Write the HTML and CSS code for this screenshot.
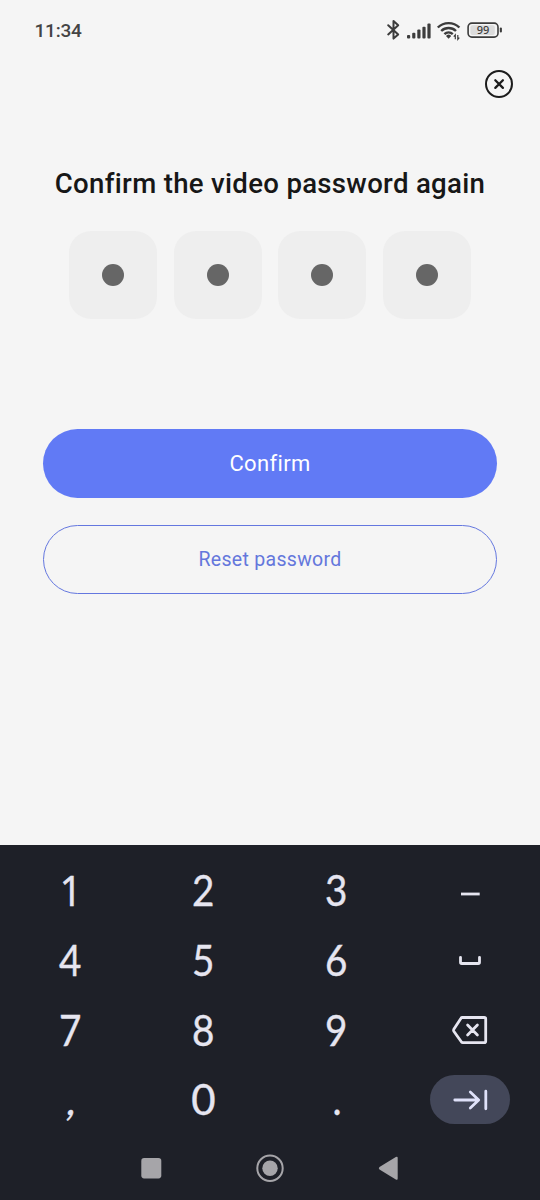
FILE: index.html
```html
<!DOCTYPE html>
<html lang="en">
<head>
<meta charset="utf-8">
<meta name="viewport" content="width=device-width">
<title>Confirm password</title>
<link rel="stylesheet" href="styles.css">
</head>
<body>
<div class="screen">
  <header class="status">
    <span class="time">11:34</span>
    <svg class="status-icons" width="120" height="24" viewBox="0 0 120 24">
      <path class="bt" d="M3.2 7.2 13.2 16.4 8.5 20.6V2.9L13.2 7.2 3.2 16.4"/>
      <g class="solid">
        <rect x="22" y="17" width="3.2" height="3.4" rx="1"/>
        <rect x="27.2" y="14.7" width="3.2" height="5.7" rx="1"/>
        <rect x="32.3" y="11.5" width="3.2" height="8.9" rx="1"/>
        <rect x="37.4" y="8.7" width="3.2" height="11.7" rx="1"/>
        <rect x="42.4" y="5.5" width="3.2" height="14.9" rx="1"/>
        <path d="M61 18a3 3 0 0 1 5.2 0L63.6 20.8z"/>
      </g>
      <path class="wifi" d="M52.8 9.5a15.5 15.5 0 0 1 21.6 0M56.2 13a10.8 10.8 0 0 1 14.8 0M59.4 16.1a6.2 6.2 0 0 1 8.4 0"/>
      <path class="data" d="M70.3 21.2v-4.4l-1.5 1.8M72.8 17v4.4l1.5-1.8"/>
      <rect class="battery" x="83.1" y="5.1" width="29.9" height="14" rx="3.8"/>
      <rect class="charge" x="85.4" y="7.2" width="24.4" height="9.8" rx="2"/>
      <rect class="solid" x="114.8" y="9.6" width="2.1" height="5" rx="1"/>
      <text class="percent" x="98" y="16.3" text-anchor="middle">99</text>
    </svg>
  </header>
  <div class="toolbar">
    <svg width="30" height="30" viewBox="0 0 30 30" role="img" aria-label="Close">
      <circle class="close" cx="15" cy="15" r="13"/>
      <path class="close cross" d="m11.3 11.3 7.6 7.6m0-7.6-7.6 7.6"/>
    </svg>
  </div>
  <main class="content">
    <h1 class="title">Confirm the video password again</h1>
    <div class="pin">
      <div class="cell"><i class="dot"></i></div>
      <div class="cell"><i class="dot"></i></div>
      <div class="cell"><i class="dot"></i></div>
      <div class="cell"><i class="dot"></i></div>
    </div>
    <button class="button primary">Confirm</button>
    <button class="button outline">Reset password</button>
  </main>
  <section class="keyboard">
    <div class="keys">
      <span class="key"><b class="one">1</b></span><span class="key"><b>2</b></span><span class="key"><b>3</b></span>
      <span class="key"><svg width="40" height="40" viewBox="0 0 40 40"><path class="stroke butt" d="M11 23h18.7"/></svg></span>
      <span class="key"><b>4</b></span><span class="key"><b>5</b></span><span class="key"><b>6</b></span>
      <span class="key"><svg width="40" height="40" viewBox="0 0 40 40"><path class="stroke" d="M10.5 16.3v5q0 1.2 1.2 1.2h16.6q1.2 0 1.2-1.2v-5"/></svg></span>
      <span class="key"><b>7</b></span><span class="key"><b>8</b></span><span class="key"><b>9</b></span>
      <span class="key"><svg width="40" height="40" viewBox="0 0 40 40"><path class="stroke" d="M12.3 7.5h22q1.4 0 1.4 1.4v22.3q0 1.4-1.4 1.4H12.8q-.8 0-1.3-.6L3.8 21.3q-.6-1 0-2L11 8.2q.4-.7 1.3-.7zM17.6 15.1l9.8 9.8m0-9.8L17.6 24.9"/></svg></span>
      <span class="key"><b class="comma">,</b></span><span class="key"><b class="zero">0</b></span><span class="key"><b class="period">.</b></span>
      <span class="key"><span class="next"><svg width="40" height="40" viewBox="0 0 40 40"><path class="stroke next-icon" d="M4.8 20h23.5M20.3 12l8.4 8-8.4 8M35.8 11.2v17.6"/></svg></span></span>
    </div>
    <nav class="nav">
      <svg width="260" height="30" viewBox="0 0 260 30">
        <rect class="navfill" x="1.3" y="5.1" width="20" height="20.3" rx="2.8"/>
        <circle class="navring" cx="130" cy="15.2" r="12.7"/>
        <circle class="navfill" cx="130" cy="15.2" r="7.7"/>
        <path class="navfill" d="M239.5 14 255.8 4q1.9-.9 1.9 1v20.5q0 1.9-1.9 1L239.5 16.4q-1.4-1.2 0-2.4z"/>
      </svg>
    </nav>
  </section>
</div>
</body>
</html>
```

FILE: styles.css
```css
* { box-sizing: border-box; }
body { margin: 0; background: #f5f5f5; font-family: Roboto, sans-serif; }
.screen { width: 540px; height: 1200px; display: flex; flex-direction: column; overflow: hidden; }

.status { height: 60px; padding: 0 36px 0 34.5px; display: flex; align-items: center; justify-content: space-between; }
.time { font-size: 19px; font-weight: 500; letter-spacing: -.2px; color: #444; }
.status-icons { margin-right: -1px; }
.bt { fill: none; stroke: #3c3c3c; stroke-width: 2; stroke-linejoin: round; stroke-linecap: round; }
.solid { fill: #3c3c3c; }
.wifi { fill: none; stroke: #3c3c3c; stroke-width: 2.4; }
.data { fill: none; stroke: #3c3c3c; stroke-width: 1.2; }
.battery { fill: none; stroke: #3c3c3c; stroke-width: 1.6; }
.charge { fill: #dcdcdc; }
.percent { font: 500 11px "Noto Sans", sans-serif; fill: #3c3c3c; }

.toolbar { height: 48px; padding: 9px 26.5px 0 0; display: flex; justify-content: flex-end; align-items: flex-start; }
.close { fill: none; stroke: #1c1c1c; stroke-width: 2; }
.cross { stroke-width: 2.3; stroke-linecap: round; }

.content { flex: 1; padding: 59px 43px 0; display: flex; flex-direction: column; }
.title { margin: 0; line-height: 33px; height: 32px; font-size: 27.6px; font-weight: 500; color: #171717; text-align: center; white-space: nowrap; letter-spacing: .3px; }
.pin { display: flex; justify-content: center; gap: 16.5px; margin: 32px 0 110px; }
.cell { width: 88px; height: 88px; border-radius: 22px; background: #eee; display: grid; place-items: center; }
.dot { width: 22px; height: 22px; border-radius: 50%; background: #666; }
.button { height: 69px; width: 454px; border-radius: 35px; padding: 0; font-family: Roboto, sans-serif; }
.primary { border: 0; background: #617af5; color: #fff; font-size: 22px; letter-spacing: .35px; }
.outline { margin-top: 27px; border: 1.4px solid #6477df; background: transparent; color: #6477dc; font-size: 19.5px; letter-spacing: .3px; padding-bottom: 1px; }

.keyboard { height: 355px; background: #1e2028; padding: 11px 3.3px 0; }
.keys { display: grid; grid-template-columns: repeat(4, 1fr); grid-auto-rows: 69.8px; }
.key { display: flex; align-items: center; justify-content: center; }
.key b { font: 400 42px/68px Lato, sans-serif; height: 70px; color: #e6e5f0; -webkit-text-stroke: .35px #e6e5f0; transform: scaleX(.92); }
.key .one { font-family: "Open Sans", sans-serif; padding-left: 3px; -webkit-text-stroke-width: .6px; }
.key .zero { transform: none; }
.key .comma { transform: skewX(-10deg); padding-left: 5px; }
.stroke { fill: none; stroke: #e6e5f0; stroke-width: 2.8; stroke-linecap: round; stroke-linejoin: round; }
.butt { stroke-linecap: butt; }
.next { width: 80px; height: 49px; border-radius: 25px; background: #434759; display: grid; place-items: center; margin-top: -1px; }
.next-icon { stroke: #dfe1f9; }
.nav { height: 65px; display: flex; justify-content: center; align-items: center; }
.navfill { fill: #a6a5a9; }
.navring { fill: none; stroke: #a6a5a9; stroke-width: 2; }
```
